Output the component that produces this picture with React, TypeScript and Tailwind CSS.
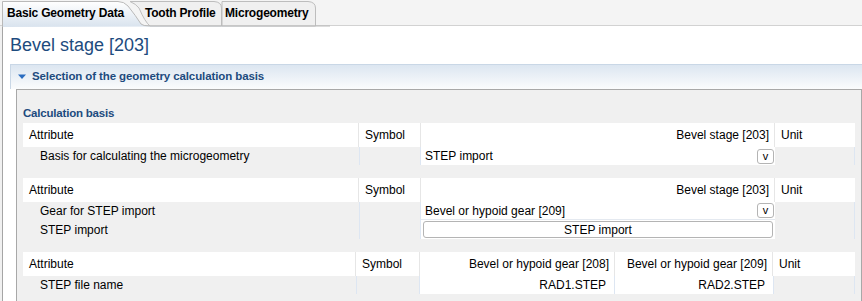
import React from 'react';

// Small "v" dropdown trigger that sits at the right edge of a value cell.
const DropButton: React.FC = () => (
  <span className="flex items-center justify-center w-[17px] h-[15px] rounded-[3px] border border-[#b4b4b4] bg-white text-[11px] leading-none text-black">
    v
  </span>
);

const HeaderCell: React.FC<{ className?: string; children?: React.ReactNode }> = ({ className = '', children }) => (
  <div className={`h-[24px] flex items-center bg-white ${className}`}>{children}</div>
);

const Tabs: React.FC = () => (
  <div className="relative h-[26px] bg-[#f4f4f4] border-b border-[#d2d2d2]">
    {/* tab outlines are a drawing: curved Eclipse style edges */}
    <svg className="absolute left-0 top-0" width="330" height="27" viewBox="0 0 330 27">
      <defs>
        <linearGradient id="act" x1="0" y1="0" x2="0" y2="1">
          <stop offset="0" stopColor="#ffffff" />
          <stop offset="1" stopColor="#d9e3ee" />
        </linearGradient>
      </defs>
      <path d="M315.5 26 V8 Q315.5 2 308 1.5 H222 V26 Z" fill="#f0f0f0" stroke="#bdbdbd" />
      <path d="M221.5 26 V8 Q221.5 2 214 1.5 H130 Q136 4 139 8 Q145 22 150 26 Z" fill="#f0f0f0" stroke="#bdbdbd" />
      <path d="M2.5 27 V1.5 H118 Q124 1.5 128 6 Q136 16 141 24 Q143 26 150 26 H330" fill="url(#act)" stroke="#b9b9b9" />
    </svg>
    <div className="relative flex h-full items-center font-bold text-[12px] tracking-[-0.2px] text-black">
      <span className="ml-[7px] w-[138px]">Basic Geometry Data</span>
      <span className="w-[80px]">Tooth Profile</span>
      <span>Microgeometry</span>
    </div>
  </div>
);

export default function App() {
  return (
    <div className="w-[862px] h-[301px] overflow-hidden bg-white font-['Liberation_Sans',Arial,sans-serif] text-[12px] text-black">
      <Tabs />
      <div className="flex h-[275px]">
        <div className="w-[2px] bg-[#f0f0f0]" />
        <div className="w-px bg-[#a5a5a5]" />
        <div className="flex-1 min-w-0">
          <div className="h-[38px] pl-[7px] pt-[8px] text-[18px] leading-[22px] text-[#1d4b7e]">Bevel stage [203]</div>
          <div className="ml-[7px]">
            <div className="h-[25px] flex items-center border-t border-l border-[#c9d7e6] bg-gradient-to-b from-[#dce6f1] to-[#fbfcfd]">
              <svg className="ml-[7px] mr-[6px]" width="8" height="6" viewBox="0 0 8 6">
                <path d="M0 0.5 H8 L4 5 Z" fill="#2a6cc0" />
              </svg>
              <span className="font-bold text-[11.5px] tracking-[-0.1px] text-[#1d4b7e]">Selection of the geometry calculation basis</span>
            </div>
            <div className="ml-[6px] h-[220px] border-t border-l border-r border-[#a8a8a8] bg-[#f0f0f0] pl-[6px] pr-[6px]">
              <div className="pt-[15px] h-[33px] font-bold text-[11.5px] tracking-[-0.2px] text-[#1d4b7e]">Calculation basis</div>

              {/* table 1 */}
              <div className="grid grid-cols-[336px_62px_354px_80px]">
                <HeaderCell className="pl-[6px] border-r border-[#e6e6e6]">Attribute</HeaderCell>
                <HeaderCell className="pl-[6px] border-r border-[#e6e6e6]">Symbol</HeaderCell>
                <HeaderCell className="justify-end pr-[5px] border-r border-[#e6e6e6]">Bevel stage [203]</HeaderCell>
                <HeaderCell className="pl-[6px]">Unit</HeaderCell>
                <div className="h-[18px] flex items-center pl-[17px]">Basis for calculating the microgeometry</div>
                <div className="h-[18px] border-x border-[#dde6f2]" />
                <div className="h-[18px] flex items-center justify-between bg-white pl-[4px] pr-[1px]">
                  <span>STEP import</span>
                  <DropButton />
                </div>
                <div className="h-[18px] border-r border-[#dde6f2]" />
              </div>

              {/* table 2 */}
              <div className="mt-[13px] grid grid-cols-[336px_62px_354px_80px]">
                <HeaderCell className="pl-[6px] border-r border-[#e6e6e6]">Attribute</HeaderCell>
                <HeaderCell className="pl-[6px] border-r border-[#e6e6e6]">Symbol</HeaderCell>
                <HeaderCell className="justify-end pr-[5px] border-r border-[#e6e6e6]">Bevel stage [203]</HeaderCell>
                <HeaderCell className="pl-[6px]">Unit</HeaderCell>
                <div className="h-[18px] flex items-center pl-[17px]">Gear for STEP import</div>
                <div className="h-[18px] border-x border-[#dde6f2]" />
                <div className="h-[18px] flex items-center justify-between bg-white pl-[4px] pr-[1px] border-b border-[#e4e9f0]">
                  <span>Bevel or hypoid gear [209]</span>
                  <DropButton />
                </div>
                <div className="h-[18px] border-r border-[#dde6f2]" />
                <div className="h-[19px] flex items-center pl-[17px]">STEP import</div>
                <div className="h-[19px] border-x border-[#dde6f2]" />
                <div className="h-[19px] bg-white px-[2px] py-px">
                  <div className="h-full flex items-center justify-center rounded-[3px] border border-[#b4b4b4] bg-white">STEP import</div>
                </div>
                <div className="h-[19px] border-r border-[#dde6f2]" />
              </div>

              {/* table 3 */}
              <div className="mt-[13px] grid grid-cols-[333px_64px_195px_158px_82px]">
                <HeaderCell className="pl-[6px] border-r border-[#e6e6e6]">Attribute</HeaderCell>
                <HeaderCell className="pl-[6px] border-r border-[#e6e6e6]">Symbol</HeaderCell>
                <HeaderCell className="justify-end pr-[5px] border-r border-[#e6e6e6]">Bevel or hypoid gear [208]</HeaderCell>
                <HeaderCell className="justify-end pr-[5px] border-r border-[#e6e6e6]">Bevel or hypoid gear [209]</HeaderCell>
                <HeaderCell className="pl-[6px]">Unit</HeaderCell>
                <div className="h-[18px] flex items-center pl-[17px]">STEP file name</div>
                <div className="h-[18px] border-x border-[#dde6f2]" />
                <div className="h-[18px] flex items-center justify-end bg-white pr-[8px] border-r border-[#dde6f2]">RAD1.STEP</div>
                <div className="h-[18px] flex items-center justify-end bg-white pr-[8px]">RAD2.STEP</div>
                <div className="h-[18px] border-x border-[#dde6f2]" />
              </div>
            </div>
          </div>
        </div>
      </div>
    </div>
  );
}
